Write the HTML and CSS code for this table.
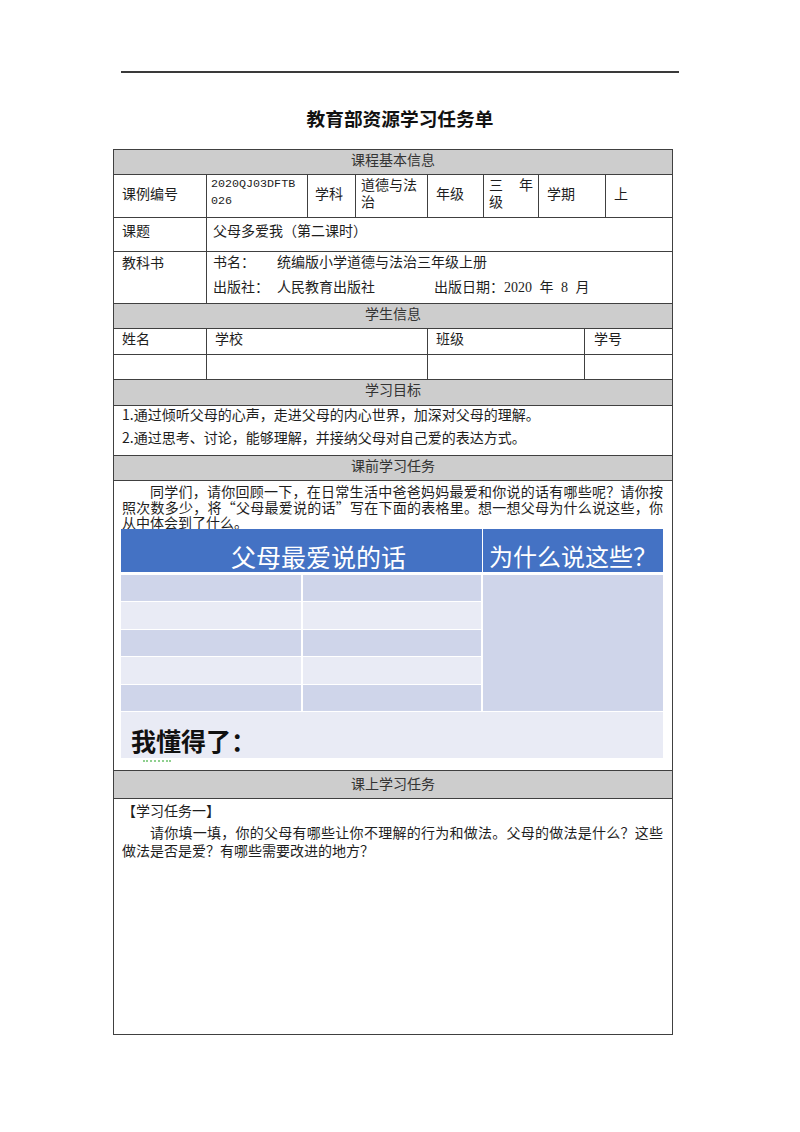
FILE: index.html
```html
<!DOCTYPE html>
<html lang="zh-CN">
<head>
<meta charset="utf-8">
<title>教育部资源学习任务单</title>
<link rel="stylesheet" href="styles.css">
</head>
<body>
<div class="page">
  <div class="rule"></div>
  <h1 class="title">教育部资源学习任务单</h1>
  <table class="sheet">
    <colgroup>
      <col class="w1"><col class="w2"><col class="w3"><col class="w4"><col class="w5"><col class="w6"><col class="w7"><col class="w8"><col class="w9">
    </colgroup>
    <tr class="hd h25"><td colspan="9">课程基本信息</td></tr>
    <tr class="r-info">
      <td>课例编号</td>
      <td class="code">2020QJ03DFTB<br>026</td>
      <td class="pl7">学科</td>
      <td class="pl5">道德与法治</td>
      <td>年级</td>
      <td class="pl5"><span class="spread"><span>三</span><span>年</span></span>级</td>
      <td colspan="2">学期</td>
      <td>上</td>
    </tr>
    <tr class="r-topic"><td>课题</td><td colspan="8" class="pl6">父母多爱我（第二课时）</td></tr>
    <tr class="r-book">
      <td>教科书</td>
      <td colspan="8" class="pl6">
        <div class="bl"><span class="lab">书名：</span>统编版小学道德与法治三年级上册</div>
        <div class="bl bl2"><span class="lab">出版社：</span>人民教育出版社<span class="date">出版日期：<span class="num">2020 年 8 月</span></span></div>
      </td>
    </tr>
    <tr class="hd h25"><td colspan="9">学生信息</td></tr>
    <tr class="r-stu"><td>姓名</td><td colspan="3">学校</td><td colspan="3">班级</td><td colspan="2" class="pl9">学号</td></tr>
    <tr class="r-blank"><td></td><td colspan="3"></td><td colspan="3"></td><td colspan="2"></td></tr>
    <tr class="hd h26"><td colspan="9">学习目标</td></tr>
    <tr class="r-goal">
      <td colspan="9">
        <div class="goals">
          <div>1.通过倾听父母的心声，走进父母的内心世界，加深对父母的理解。</div>
          <div>2.通过思考、讨论，能够理解，并接纳父母对自己爱的表达方式。</div>
        </div>
      </td>
    </tr>
    <tr class="hd h25"><td colspan="9">课前学习任务</td></tr>
    <tr class="r-pre">
      <td colspan="9">
        <p class="intro">
          <span class="jl first">同学们，请你回顾一下，在日常生活中爸爸妈妈最爱和你说的话有哪些呢？请你按</span>
          <span class="jl">照次数多少，将“父母最爱说的话”写在下面的表格里。想一想父母为什么说这些，你</span>
          <span class="ln">从中体会到了什么。</span>
        </p>
        <div class="chart">
          <div class="ch-head">
            <div class="ch-h ch-h1">父母最爱说的话</div>
            <div class="ch-h ch-h2">为什么说这些？</div>
          </div>
          <div class="ch-body">
            <div class="cell dark"></div><div class="cell dark"></div>
            <div class="why"></div>
            <div class="cell light"></div><div class="cell light"></div>
            <div class="cell dark"></div><div class="cell dark"></div>
            <div class="cell light"></div><div class="cell light"></div>
            <div class="cell dark"></div><div class="cell dark"></div>
          </div>
          <div class="ch-foot">我懂得了：</div>
          <div class="ch-mark"></div>
        </div>
      </td>
    </tr>
    <tr class="hd h28"><td colspan="9">课上学习任务</td></tr>
    <tr class="r-task">
      <td colspan="9">
        <div class="task-title">【学习任务一】</div>
        <p class="task-p">
          <span class="jl first">请你填一填，你的父母有哪些让你不理解的行为和做法。父母的做法是什么？这些</span>
          <span class="ln">做法是否是爱？有哪些需要改进的地方？</span>
        </p>
      </td>
    </tr>
  </table>
</div>
</body>
</html>
```
FILE: styles.css
```css
* { box-sizing: border-box; }
html, body { margin: 0; padding: 0; background: #fff; }
body {
  font-family: "Noto Sans CJK SC", "Noto Sans", sans-serif;
  font-size: 14px;
  color: #1e1e1e;
}
.page { width: 800px; height: 1132px; padding-top: 71px; overflow: hidden; }
.rule { width: 558px; height: 2px; background: #3a3a3a; margin: 0 auto; }
.title {
  margin: 33px 0 0;
  font-size: 18.7px;
  line-height: 24px;
  font-weight: 700;
  text-align: center;
  color: #111;
}

.sheet {
  margin: 19px 0 0 113px;
  width: 559px;
  table-layout: fixed;
  border-collapse: collapse;
  border: 1px solid #404040;
}
.sheet td {
  border: 1px solid #404040;
  padding: 0 4px 0 8px;
  vertical-align: top;
  line-height: 20px;
}
.w1 { width: 93px; } .w2 { width: 101px; } .w3 { width: 48px; }
.w4 { width: 72px; } .w5 { width: 56px; } .w6 { width: 55px; }
.w7 { width: 46px; } .w8 { width: 21px; } .w9 { width: 67px; }

.sheet .pl5 { padding-left: 5px; }
.sheet .pl6 { padding-left: 6px; }
.sheet .pl7 { padding-left: 7px; }
.sheet .pl9 { padding-left: 9px; }

.hd td {
  background: #cdcdcd;
  text-align: center;
  vertical-align: top;
  line-height: 18px;
  color: #333;
  padding: 0;
}
.h25 { height: 25px; }
.h26 { height: 26px; }
.h28 { height: 28px; }
.sheet .h28 td { padding-top: 3px; }

.r-info { height: 43px; }
.r-info td { vertical-align: middle; line-height: 17px; padding-bottom: 6px; }
.sheet .code {
  font-family: "Liberation Mono", monospace;
  font-size: 11.7px;
  padding-left: 4px;
  white-space: nowrap;
}
.spread { display: flex; justify-content: space-between; width: 44px; }

.r-topic { height: 34px; }
.r-topic td { padding-top: 2px; }

.r-book { height: 52px; }
.bl { line-height: 18px; }
.bl2 { margin-top: 7px; }
.lab { display: inline-block; width: 64px; }
.date { margin-left: 59px; }
.num { font-family: "Liberation Serif", "Noto Sans CJK SC", serif; word-spacing: 4px; }

.r-stu { height: 26px; }
.r-stu td { line-height: 18px; }
.r-blank { height: 25px; }

.r-goal { height: 50px; }
.r-goal td { line-height: 23px; }
.goals { margin-top: -3px; }

.r-pre { height: 290px; }
.sheet .r-pre td { padding: 3px 9px 0 7px; }
.intro { margin: 0; padding-left: 1px; line-height: 15.5px; }
.jl { display: block; text-align: justify; text-align-last: justify; }
.ln { display: block; }
.first { text-indent: 28px; }

.chart { position: relative; width: 542px; margin-top: -2px; }
.ch-head { display: grid; grid-template-columns: 361px 180px; column-gap: 1px; height: 43px; margin-bottom: 3px; }
.ch-h {
  background: #4472c4;
  color: #fff;
  font-size: 25px;
  line-height: 30px;
  padding-top: 12px;
  white-space: nowrap;
}
.ch-h1 { padding-left: 110px; }
.ch-h2 { padding-left: 6px; font-size: 24px; }
.ch-body {
  display: grid;
  grid-template-columns: 180px 178px 180px;
  grid-template-rows: repeat(5, 26.6px);
  column-gap: 2px;
  row-gap: 1px;
}
.cell.dark { background: #cfd5ea; }
.cell.light { background: #e9ebf5; }
.why { grid-column: 3; grid-row: 1 / 6; background: #cfd5ea; }
.ch-foot {
  height: 46px;
  margin-top: 1px;
  background: #e9ebf5;
  font-size: 25px;
  font-weight: 700;
  line-height: 28px;
  padding: 14px 0 0 10px;
  color: #111;
}
.ch-mark { width: 28px; margin: 2px 0 0 22px; border-top: 2px dotted #8fd08f; }

.r-task { height: 236px; }
.sheet .r-task td { padding: 1px 9px 0 8px; }
.task-title { line-height: 20px; }
.task-p { margin: 3px 0 0; line-height: 18px; }
```
